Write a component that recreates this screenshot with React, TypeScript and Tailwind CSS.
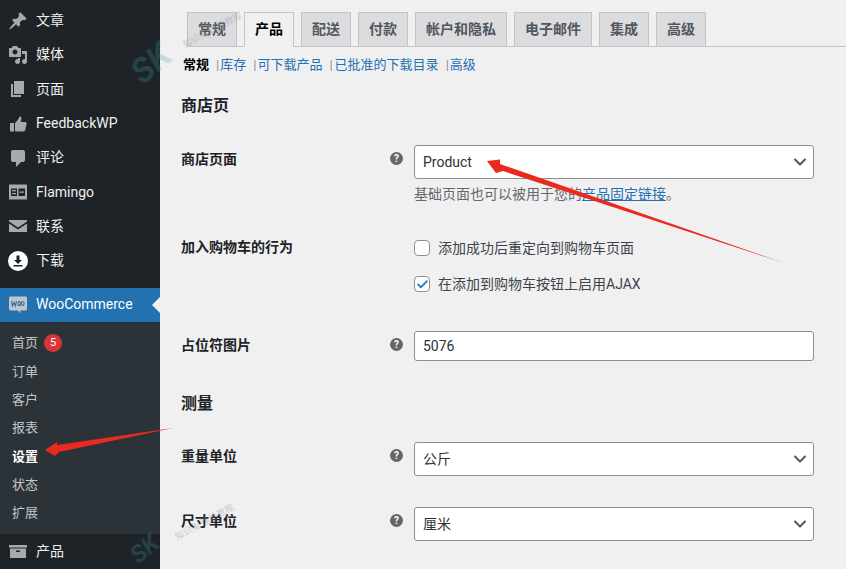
import { ChevronDown, Check } from "lucide-react";
import type { ReactNode } from "react";

const cjk = "font-['Roboto','Noto_Sans_CJK_SC',sans-serif]";

function PinIcon() {
  return (
    <svg viewBox="0 0 20 20" className="w-5 h-5 fill-[#a7aaad]">
      <path d="M10.44 3.02l1.82-1.82 6.36 6.35-1.83 1.82c-1.05-.68-2.48-.57-3.41.36l-.75.75c-.92.93-1.04 2.35-.35 3.41l-1.83 1.82-2.41-2.41-2.8 2.79c-.42.42-3.38 2.71-3.8 2.29s1.86-3.39 2.28-3.81l2.79-2.79L4.1 9.36l1.83-1.82c1.05.69 2.48.57 3.4-.36l.75-.75c.93-.92 1.05-2.35.36-3.41z" />
    </svg>
  );
}

function MediaIcon() {
  return (
    <svg viewBox="0 0 20 20" className="w-5 h-5 fill-[#a7aaad]">
      <path d="M13 11V4c0-.55-.45-1-1-1h-1.67L9 1H5L3.67 3H2c-.55 0-1 .45-1 1v7c0 .55.45 1 1 1h10c.55 0 1-.45 1-1zM7 4.5c1.38 0 2.5 1.12 2.5 2.5S8.38 9.5 7 9.5 4.5 8.38 4.5 7 5.62 4.5 7 4.5zM14 6h5v10.5c0 1.38-1.12 2.5-2.5 2.5S14 17.88 14 16.5s1.12-2.5 2.5-2.5c.17 0 .34.02.5.05V9h-3V6zm-4 8.05V13h2v3.5c0 1.38-1.12 2.5-2.5 2.5S7 17.88 7 16.5 8.12 14 9.5 14c.17 0 .34.02.5.05z" />
    </svg>
  );
}

function PageIcon() {
  return (
    <svg viewBox="0 0 20 20" className="w-5 h-5 fill-[#a7aaad]">
      <path d="M6 15V2h10v13H6zm-1 1h8v2H3V5h2v11z" />
    </svg>
  );
}

function ThumbIcon() {
  return (
    <svg viewBox="0 0 20 20" className="w-5 h-5 fill-[#a7aaad]">
      <path d="M12 2.5c1.2.2 1.7 1.4 1.4 2.6L12.7 8H17c1.2 0 1.9 1 1.6 2.1l-1.5 6.2c-.2.9-.9 1.2-1.7 1.2H8c-.6 0-1-.4-1-1V9c1.6-1.6 3.6-3.6 4-5.2.1-.6.4-1.4 1-1.3zM2 9h4v8.5H2z" />
    </svg>
  );
}

function CommentIcon() {
  return (
    <svg viewBox="0 0 20 20" className="w-5 h-5 fill-[#a7aaad]">
      <path d="M5 2h10c1.1 0 2 .9 2 2v8c0 1.1-.9 2-2 2h-2l-5 5v-5H5c-1.1 0-2-.9-2-2V4c0-1.1.9-2 2-2z" />
    </svg>
  );
}

function FormIcon() {
  return (
    <svg viewBox="0 0 20 20" className="w-5 h-5 fill-[#a7aaad]">
      <path fillRule="evenodd" d="M1 2.500h18v15H1zM3 6.500h6v7.500H3zm7.500 0H17v7.500h-6.500z" />
      <path d="M4 8h4v1.200H4zm0 3h4v1.200H4zm7.500-1.500H16v1.200h-4.500z" />
    </svg>
  );
}

function MailIcon() {
  return (
    <svg viewBox="0 0 20 20" className="w-5 h-5 fill-[#a7aaad]">
      <path d="M1 4h18v1.500l-9 6-9-6V4zm0 3.500l9 6 9-6V16H1V7.500z" />
    </svg>
  );
}

function DownloadIcon() {
  return (
    <svg viewBox="0 0 20 20" className="w-5 h-5">
      <circle cx="10" cy="10" r="10" fill="#fff" />
      <path d="M8.500 4.500h3V9H14l-4 4-4-4h2.500zM5.500 14h9v1.600h-9z" fill="#1d2327" />
    </svg>
  );
}

function WooIcon() {
  return (
    <svg viewBox="0 0 20 20" className="w-5 h-5">
      <path d="M2.500 1.500h15c.8 0 1.500.7 1.500 1.500v11c0 .8-.7 1.500-1.500 1.500H12l.8 2.800-3.200-2.800H2.500C1.700 15.500 1 14.800 1 14V3c0-.8.7-1.500 1.500-1.500z" fill="#c3c4c7" />
      <path d="M3.500 6l1 5 1.500-3.500L7.500 11l1-5M10 8.500a1.300 2 0 1 0 2.600 0a1.300 2 0 1 0-2.600 0M13.500 8.500a1.300 2 0 1 0 2.600 0a1.300 2 0 1 0-2.600 0" fill="none" stroke="#2271b1" strokeWidth="1.100" />
    </svg>
  );
}

function ArchiveIcon() {
  return (
    <svg viewBox="0 0 20 20" className="w-5 h-5 fill-[#a7aaad]">
      <path fillRule="evenodd" d="M1 4h18v2.500H1zM2 7.500h16V17H2zM12 9.500H8v1.500h4z" />
    </svg>
  );
}

function HelpIcon() {
  return (
    <span className="w-[13px] h-[13px] rounded-full bg-[#666] text-white text-[10px] leading-[13px] font-bold text-center">
      ?
    </span>
  );
}

function MenuItem({ icon, label }: { icon: ReactNode; label: string }) {
  return (
    <div className="h-[34.300px] flex items-center pl-[8px] gap-[8px] text-[14px] text-[#f0f0f1]">
      <span className="w-5 flex justify-center">{icon}</span>
      <span>{label}</span>
    </div>
  );
}

function SubItem({ label, bold, badge }: { label: string; bold?: boolean; badge?: string }) {
  return (
    <div className={`h-[28.300px] flex items-center pl-[12px] gap-[6px] text-[13px] ${bold ? "font-bold text-white" : "text-[#c3c4c7]"}`}>
      <span>{label}</span>
      {badge && (
        <span className="w-[18px] h-[18px] rounded-full bg-[#d63638] text-white text-[11px] leading-[18px] text-center">
          {badge}
        </span>
      )}
    </div>
  );
}

function Tab({ label, active, width }: { label: string; active?: boolean; width: string }) {
  return (
    <div
      className={`h-[35px] border border-[#c3c4c7] flex items-center justify-center text-[14px] font-semibold ${width} ${
        active ? "bg-[#f0f0f1] border-b-[#f0f0f1] text-black" : "bg-[#dcdcde] text-[#50575e]"
      }`}
    >
      {label}
    </div>
  );
}

function SelectBox({ value }: { value: string }) {
  return (
    <div className="w-[400px] h-[34px] bg-white border border-[#8c8f94] rounded-[3px] flex items-center justify-between pl-[8px] pr-[3px] text-[14px] text-[#2c3338]">
      <span>{value}</span>
      <ChevronDown className="w-[20px] h-[20px] text-[#50575e]" strokeWidth={2.400} />
    </div>
  );
}

function Row({ label, className, children }: { label: string; className: string; children: ReactNode }) {
  return (
    <div className={`flex items-start ${className}`}>
      <label className="w-[209px] text-[14px] leading-[21px] font-semibold text-[#1d2327] mt-[4px]">{label}</label>
      <span className="w-[24px] flex mt-[7px]">
        <HelpIcon />
      </span>
      <div>{children}</div>
    </div>
  );
}

function Watermark({ mark, caption }: { mark: string; caption: string }) {
  return (
    <>
      <span className={`absolute -rotate-[40deg] leading-none font-bold italic text-[#3fa0a8]/25 pointer-events-none ${mark}`}>
        SK
      </span>
      <span className={`absolute -rotate-[28deg] text-[9px] leading-none text-[#8c8f94]/40 pointer-events-none whitespace-nowrap ${caption}`}>
        知识兔 建站教程
      </span>
    </>
  );
}

export default function App() {
  return (
    <div className={`relative w-[846px] h-[569px] overflow-hidden flex bg-[#f0f0f1] ${cjk}`}>
      {/* Admin sidebar */}
      <aside className="w-[160px] h-full shrink-0 bg-[#1d2327] pt-[3.500px]">
        <MenuItem icon={<PinIcon />} label="文章" />
        <MenuItem icon={<MediaIcon />} label="媒体" />
        <MenuItem icon={<PageIcon />} label="页面" />
        <MenuItem icon={<ThumbIcon />} label="FeedbackWP" />
        <MenuItem icon={<CommentIcon />} label="评论" />
        <MenuItem icon={<FormIcon />} label="Flamingo" />
        <MenuItem icon={<MailIcon />} label="联系" />
        <MenuItem icon={<DownloadIcon />} label="下载" />
        <div className="relative h-[34px] mt-[10.100px] bg-[#2271b1] flex items-center pl-[8px] gap-[8px] text-[14px] text-white">
          <WooIcon />
          <span>WooCommerce</span>
          <span className="absolute right-0 top-[9px] border-y-[8px] border-r-[8px] border-y-transparent border-r-[#f0f0f1]" />
        </div>
        <div className="bg-[#2c3338] h-[212px] pt-[7px]">
          <SubItem label="首页" badge="5" />
          <SubItem label="订单" />
          <SubItem label="客户" />
          <SubItem label="报表" />
          <SubItem label="设置" bold />
          <SubItem label="状态" />
          <SubItem label="扩展" />
        </div>
        <MenuItem icon={<ArchiveIcon />} label="产品" />
      </aside>

      {/* Settings content */}
      <main className="flex-1 min-w-0">
        <nav className="mt-[12px] ml-[27px] h-[35px] border-b border-[#c3c4c7] flex gap-[7px] w-[659px]">
          <Tab label="常规" width="w-[50px]" />
          <Tab label="产品" width="w-[50px]" active />
          <Tab label="配送" width="w-[50px]" />
          <Tab label="付款" width="w-[50px]" />
          <Tab label="帐户和隐私" width="w-[92px]" />
          <Tab label="电子邮件" width="w-[78px]" />
          <Tab label="集成" width="w-[50px]" />
          <Tab label="高级" width="w-[50px]" />
        </nav>
        <div className="ml-[23px] mt-[9px] h-[18px] flex items-center text-[13px] text-[#2271b1]">
          <span className="font-bold text-black">常规</span>
          <span className="text-[#8c8f94] ml-[7px] mr-[1px]">|</span>
          <a>库存</a>
          <span className="text-[#8c8f94] ml-[7px] mr-[1px]">|</span>
          <a>可下载产品</a>
          <span className="text-[#8c8f94] ml-[7px] mr-[2px]">|</span>
          <a>已批准的下载目录</a>
          <span className="text-[#8c8f94] ml-[7px] mr-[1px]">|</span>
          <a>高级</a>
        </div>
        <div className="ml-[21px]">
          <h2 className="mt-[20px] text-[16px] leading-[24px] font-bold text-[#1d2327]">商店页</h2>
          <Row label="商店页面" className="mt-[27px]">
            <SelectBox value="Product" />
            <p className="mt-[6px] text-[14px] leading-[18px] text-[#646970]">
              基础页面也可以被用于您的<a className="text-[#2271b1] underline">产品固定链接</a>。
            </p>
          </Row>
          <div className="flex mt-[37px]">
            <label className="w-[233px] text-[14px] font-semibold text-[#1d2327] mt-[-3px]">加入购物车的行为</label>
            <div className="flex flex-col gap-[20px]">
              <div className="flex items-center gap-[8px] text-[14px] text-[#3c434a] h-[16px]">
                <span className="w-[16px] h-[16px] bg-white border border-[#8c8f94] rounded-[4px]" />
                添加成功后重定向到购物车页面
              </div>
              <div className="flex items-center gap-[8px] text-[14px] text-[#3c434a] h-[16px]">
                <span className="w-[16px] h-[16px] bg-white border border-[#8c8f94] rounded-[4px] flex items-center justify-center">
                  <Check className="w-[13px] h-[13px] text-[#3582c4]" strokeWidth={3.500} />
                </span>
                在添加到购物车按钮上启用AJAX
              </div>
            </div>
          </div>
          <Row label="占位符图片" className="mt-[39px]">
            <div className="w-[400px] h-[30px] bg-white border border-[#8c8f94] rounded-[3px] flex items-center pl-[8px] text-[14px] text-[#2c3338]">
              5076
            </div>
          </Row>
          <h2 className="mt-[31px] text-[16px] leading-[24px] font-bold text-[#1d2327]">测量</h2>
          <Row label="重量单位" className="mt-[26px]">
            <SelectBox value="公斤" />
          </Row>
          <Row label="尺寸单位" className="mt-[31px]">
            <SelectBox value="厘米" />
          </Row>
        </div>
      </main>

      {/* Annotation arrows pasted over the screenshot */}
      <svg className="absolute inset-0 pointer-events-none" width="846" height="569" viewBox="0 0 846 569">
        <path d="M487 161L500 159.500L500 164L784 263L503 171L496 173Z" fill="#ea2a1f" />
        <path d="M45 450L57 442L57 445L173 428L59 452L55 456Z" fill="#ea2a1f" />
      </svg>

      <Watermark mark="text-[34px] left-[130px] top-[46px]" caption="left-[180px] top-[26px]" />
      <Watermark mark="text-[24px] left-[130px] top-[537px]" caption="left-[172px] top-[518px]" />
    </div>
  );
}
